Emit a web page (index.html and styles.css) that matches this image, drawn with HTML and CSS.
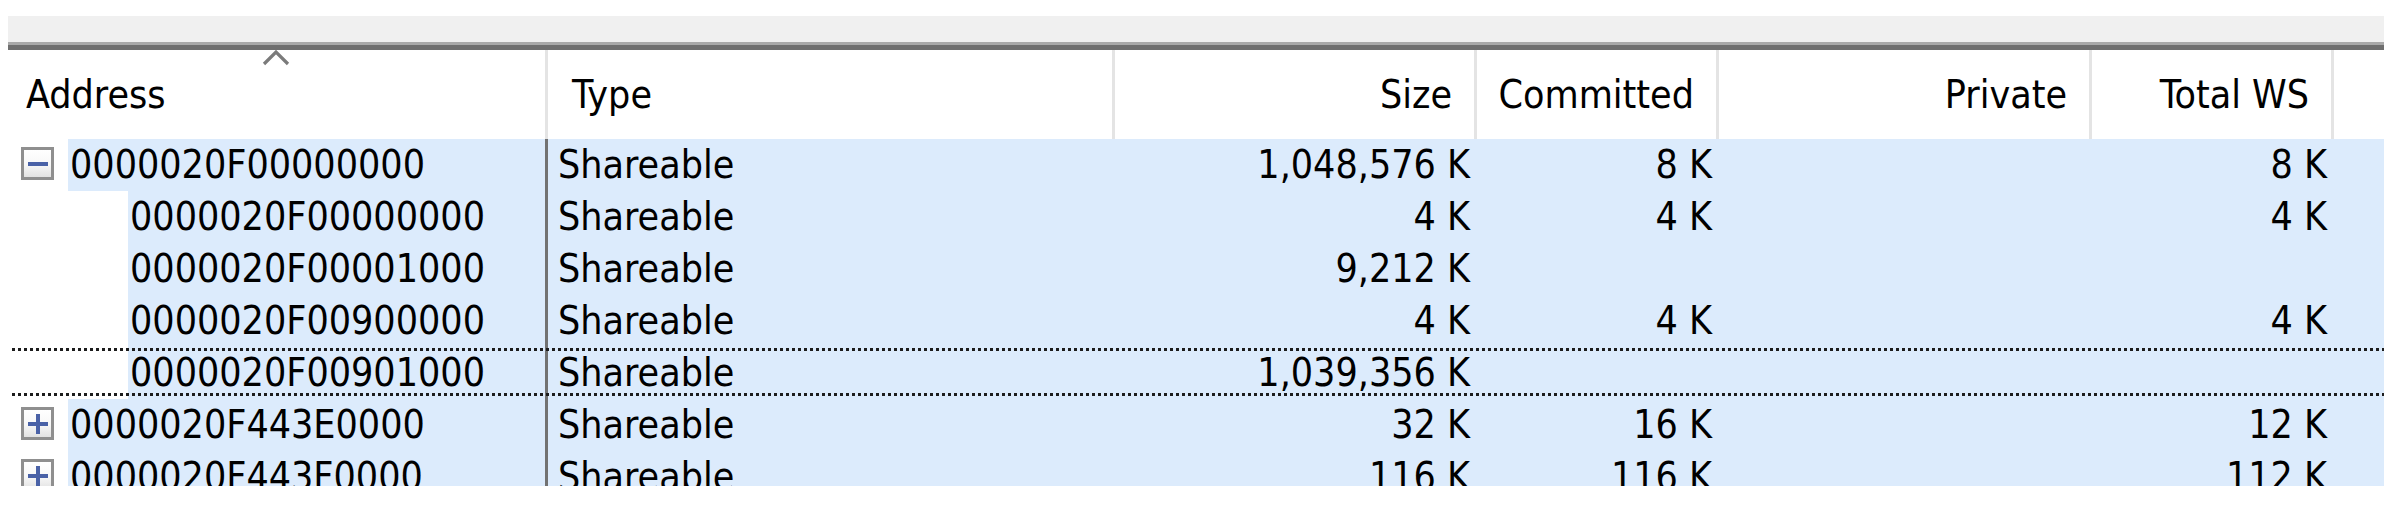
FILE: index.html
```html
<!DOCTYPE html>
<html lang="en">
<head>
<meta charset="utf-8">
<title>Memory regions</title>
<link rel="stylesheet" href="styles.css">
</head>
<body>
<div class="window">
  <div class="splitter-strip"></div>

  <div class="grid-view">
    <div class="header-row">
      <div class="hcell col-address">
        <svg class="sort-caret" width="30" height="18" viewBox="0 0 30 18" aria-hidden="true">
          <polyline points="3,16 15,4 27,16" fill="none" stroke="#7b7b7b" stroke-width="3.2"/>
        </svg>
        Address
      </div>
      <div class="hcell col-type left">Type</div>
      <div class="hcell right">Size</div>
      <div class="hcell right">Committed</div>
      <div class="hcell right">Private</div>
      <div class="hcell right">Total WS</div>
      <div class="hcell filler"></div>
    </div>

    <div class="rows">
      <div class="row">
        <div class="cell addr level-0">
          <span class="expander">
            <svg width="20" height="20" viewBox="0 0 20 20"><rect x="0" y="8" width="20" height="4" fill="#4a62a7"/></svg>
          </span>
          <span class="label">0000020F00000000</span>
        </div>
        <div class="cell type">Shareable</div>
        <div class="cell num">1,048,576 K</div>
        <div class="cell num">8 K</div>
        <div class="cell num"></div>
        <div class="cell num">8 K</div>
        <div class="cell"></div>
      </div>

      <div class="row">
        <div class="cell addr level-1"><span class="label">0000020F00000000</span></div>
        <div class="cell type">Shareable</div>
        <div class="cell num">4 K</div>
        <div class="cell num">4 K</div>
        <div class="cell num"></div>
        <div class="cell num">4 K</div>
        <div class="cell"></div>
      </div>

      <div class="row">
        <div class="cell addr level-1"><span class="label">0000020F00001000</span></div>
        <div class="cell type">Shareable</div>
        <div class="cell num">9,212 K</div>
        <div class="cell num"></div>
        <div class="cell num"></div>
        <div class="cell num"></div>
        <div class="cell"></div>
      </div>

      <div class="row">
        <div class="cell addr level-1"><span class="label">0000020F00900000</span></div>
        <div class="cell type">Shareable</div>
        <div class="cell num">4 K</div>
        <div class="cell num">4 K</div>
        <div class="cell num"></div>
        <div class="cell num">4 K</div>
        <div class="cell"></div>
      </div>

      <div class="row focused">
        <div class="cell addr level-1"><span class="label">0000020F00901000</span></div>
        <div class="cell type">Shareable</div>
        <div class="cell num">1,039,356 K</div>
        <div class="cell num"></div>
        <div class="cell num"></div>
        <div class="cell num"></div>
        <div class="cell"></div>
      </div>

      <div class="row">
        <div class="cell addr level-0">
          <span class="expander">
            <svg width="20" height="20" viewBox="0 0 20 20"><rect x="0" y="8" width="20" height="4" fill="#4a62a7"/><rect x="8" y="0" width="4" height="20" fill="#4a62a7"/></svg>
          </span>
          <span class="label">0000020F443E0000</span>
        </div>
        <div class="cell type">Shareable</div>
        <div class="cell num">32 K</div>
        <div class="cell num">16 K</div>
        <div class="cell num"></div>
        <div class="cell num">12 K</div>
        <div class="cell"></div>
      </div>

      <div class="row">
        <div class="cell addr level-0">
          <span class="expander">
            <svg width="20" height="20" viewBox="0 0 20 20"><rect x="0" y="8" width="20" height="4" fill="#4a62a7"/><rect x="8" y="0" width="4" height="20" fill="#4a62a7"/></svg>
          </span>
          <span class="label">0000020F443F0000</span>
        </div>
        <div class="cell type">Shareable</div>
        <div class="cell num">116 K</div>
        <div class="cell num">116 K</div>
        <div class="cell num"></div>
        <div class="cell num">112 K</div>
        <div class="cell"></div>
      </div>
    </div>
  </div>
</div>
</body>
</html>
```

FILE: styles.css
```css
html, body {
  margin: 0;
  padding: 0;
  background: #ffffff;
}

body {
  width: 2384px;
  height: 512px;
  overflow: hidden;
  font-family: "DejaVu Sans Condensed", "DejaVu Sans", sans-serif;
  font-stretch: condensed;
  font-size: 39px;
  color: #000000;
}

.window {
  padding-top: 16px;
}

/* grey splitter bar with its two-tone lower edge */
.splitter-strip {
  margin-left: 8px;
  height: 34px;
  background: linear-gradient(to bottom,
    #f0f0f0 0, #f0f0f0 26px,
    #a9a9a9 26px, #a9a9a9 29px,
    #6f6f6f 29px, #6f6f6f 34px);
}

.header-row,
.row {
  display: grid;
  grid-template-columns: 548px 567px 362px 242px 373px 242px 1fr;
}

/* column headers */
.header-row {
  height: 89px;
  line-height: 89px;
}

.hcell {
  position: relative;
  border-right: 3px solid #e4e4e4;
  white-space: nowrap;
  overflow: hidden;
}

.hcell.col-address {
  padding-left: 26px;
  overflow: visible;
}

.hcell.left {
  padding-left: 24px;
}

.hcell.right {
  text-align: right;
  padding-right: 22px;
}

.hcell.filler {
  border-right: none;
}

.sort-caret {
  position: absolute;
  left: 261px;
  top: -2px;
}

/* data rows */
.rows {
  height: 347px;
  overflow: hidden;
}

.row {
  position: relative;
  height: 52px;
  line-height: 52px;
}

.cell {
  background: #dcebfc;
  white-space: nowrap;
  overflow: hidden;
}

.cell.addr {
  display: flex;
  background: transparent;
  border-right: 3px solid #727272;
}

.cell.addr.level-0 {
  padding-left: 21px;
}

.cell.addr.level-1 {
  padding-left: 128px;
}

.expander {
  flex: none;
  box-sizing: border-box;
  width: 33px;
  height: 33px;
  margin-top: 8px;
  margin-right: 14px;
  border: 3px solid #8f8f8f;
  background: linear-gradient(to bottom, #ffffff 0, #f7f7f7 55%, #e2e2e2 100%);
  display: flex;
  align-items: center;
  justify-content: center;
}

.expander svg {
  display: block;
}

.label {
  flex: 1;
  background: #dcebfc;
  padding-left: 2px;
}

.cell.type {
  padding-left: 10px;
}

.cell.num {
  text-align: right;
  padding-right: 7px;
}

/* keyboard focus rectangle on the current row */
.row.focused::before,
.row.focused::after {
  content: "";
  position: absolute;
  left: 12px;
  right: 0;
  height: 3px;
  background: repeating-linear-gradient(to right, #1c1c1c 0, #1c1c1c 3px, transparent 3px, transparent 6px);
}

.row.focused::before {
  top: 1px;
}

.row.focused::after {
  top: 46px;
}
```
